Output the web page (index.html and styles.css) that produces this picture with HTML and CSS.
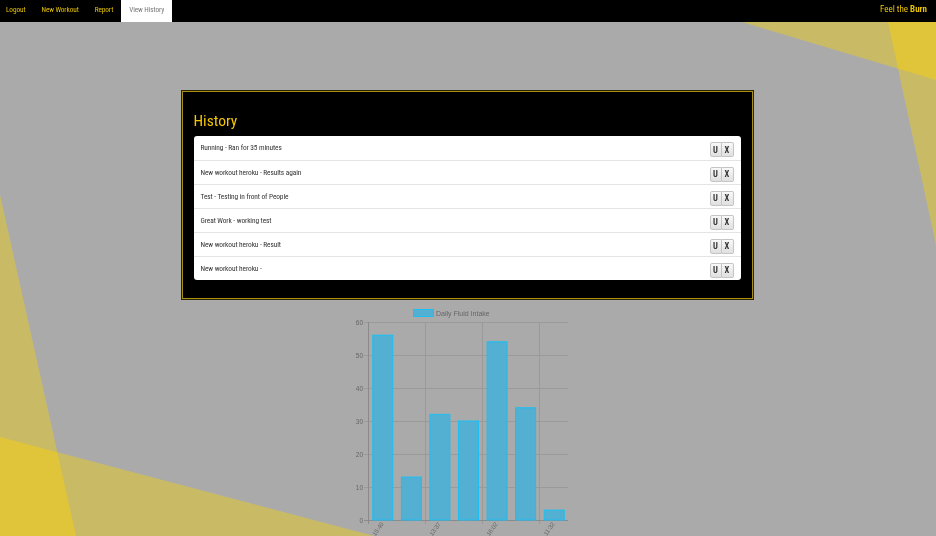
FILE: index.html
```html
<!DOCTYPE html>
<html>
<head>
<meta charset="utf-8">
<title>View History</title>
<link rel="stylesheet" href="styles.css">
</head>
<body>
<svg class="bg" viewBox="0 0 936 536" preserveAspectRatio="none" aria-hidden="true">
  <polygon points="742,22 936,22 936,80" fill="#c9bb66"/>
  <polygon points="888,22 936,22 936,245" fill="#c9bb66"/>
  <polygon points="888,22 936,22 936,80 898,68.6" fill="#e0c43a"/>
  <polygon points="0,195 0,536 76,536" fill="#c9bb66"/>
  <polygon points="0,437 0,536 374,536" fill="#c9bb66"/>
  <polygon points="0,437 57.3,452.2 76,536 0,536" fill="#e0c43a"/>
</svg>
<nav class="navbar">
  <ul class="nav">
    <li><a href="#">Logout</a></li>
    <li><a href="#">New Workout</a></li>
    <li><a href="#">Report</a></li>
    <li class="active"><a href="#">View History</a></li>
  </ul>
  <div class="brand">Feel the <b>Burn</b></div>
</nav>
<main class="main">
  <section class="card">
    <h1 class="title">History</h1>
    <ul class="list">
      <li class="row"><span class="text">Running - Ran for 35 minutes</span><span class="btns"><button class="btn">U</button><button class="btn">X</button></span></li>
      <li class="row"><span class="text">New workout heroku - Results again</span><span class="btns"><button class="btn">U</button><button class="btn">X</button></span></li>
      <li class="row"><span class="text">Test - Testing in front of People</span><span class="btns"><button class="btn">U</button><button class="btn">X</button></span></li>
      <li class="row"><span class="text">Great Work - working test</span><span class="btns"><button class="btn">U</button><button class="btn">X</button></span></li>
      <li class="row"><span class="text">New workout heroku - Result</span><span class="btns"><button class="btn">U</button><button class="btn">X</button></span></li>
      <li class="row"><span class="text">New workout heroku -</span><span class="btns"><button class="btn">U</button><button class="btn">X</button></span></li>
    </ul>
  </section>
  <svg class="chart" width="260" height="236" viewBox="0 0 260 236">
    <rect x="74.5" y="9.5" width="20" height="7" fill="#53b0d3" stroke="#19c0f5" stroke-width="1"/>
    <text x="97" y="15.5" class="legend">Daily Fluid Intake</text>
    <g stroke="#9a9a9a" stroke-width="1">
      <line x1="25" y1="22.5" x2="229" y2="22.5"/>
      <line x1="25" y1="55.5" x2="229" y2="55.5"/>
      <line x1="25" y1="88.5" x2="229" y2="88.5"/>
      <line x1="25" y1="121.5" x2="229" y2="121.5"/>
      <line x1="25" y1="154.5" x2="229" y2="154.5"/>
      <line x1="25" y1="187.5" x2="229" y2="187.5"/>
      <line x1="86.5" y1="22" x2="86.5" y2="224"/>
      <line x1="143.5" y1="22" x2="143.5" y2="224"/>
      <line x1="200.5" y1="22" x2="200.5" y2="224"/>
    </g>
    <g stroke="#8a8a8a" stroke-width="1">
      <line x1="25" y1="220.5" x2="229" y2="220.5"/>
      <line x1="29.5" y1="22" x2="29.5" y2="224"/>
    </g>
    <g class="ylab" text-anchor="end">
      <text x="24" y="24.5">60</text>
      <text x="24" y="57.5">50</text>
      <text x="24" y="90.5">40</text>
      <text x="24" y="123.5">30</text>
      <text x="24" y="156.5">20</text>
      <text x="24" y="189.5">10</text>
      <text x="24" y="222.5">0</text>
    </g>
    <g fill="#53b0d3" stroke="#19c0f5" stroke-width="1">
      <rect x="33.8" y="35.2" width="20" height="184.8"/>
      <rect x="62.4" y="177.1" width="20" height="42.9"/>
      <rect x="90.9" y="114.4" width="20" height="105.6"/>
      <rect x="119.5" y="121" width="20" height="99"/>
      <rect x="148.1" y="41.8" width="20" height="178.2"/>
      <rect x="176.6" y="107.8" width="20" height="112.2"/>
      <rect x="205.2" y="210.1" width="20" height="9.9"/>
    </g>
    <g class="xlab" text-anchor="end">
      <text transform="translate(45,224) rotate(-55)">15:40</text>
      <text transform="translate(102,224) rotate(-55)">13:37</text>
      <text transform="translate(159,224) rotate(-55)">16:02</text>
      <text transform="translate(216,224) rotate(-55)">11:32</text>
    </g>
  </svg>
</main>
</body>
</html>
```
FILE: styles.css
```css
html {
  background: #aaaaaa;
}
body {
  margin: 0;
  font-family: "Roboto Condensed", "Liberation Sans Narrow", "Open Sans", Roboto, sans-serif;
  color: #333;
}
.bg {
  position: fixed;
  top: 0;
  left: 0;
  width: 936px;
  height: 536px;
  z-index: -1;
}
.navbar {
  height: 22px;
  background: #000;
  display: flex;
  align-items: stretch;
  justify-content: space-between;
}
.nav {
  list-style: none;
  margin: 0 0 0 -2px;
  padding: 0;
  display: flex;
}
.nav li a {
  display: block;
  height: 22px;
  line-height: 20px;
  padding: 0 8px;
  font-size: 7.3px;
  letter-spacing: -0.1px;
  color: #e8c400;
  text-decoration: none;
}
.nav li.active a {
  background: #fff;
  color: #777;
}
.brand {
  color: #e8c400;
  font-size: 9px;
  line-height: 18px;
  padding-right: 9px;
}
.brand b {
  font-weight: 700;
}
.main {
  display: flex;
  flex-direction: column;
  align-items: center;
  padding-top: 69px;
}
.card {
  width: 547px;
  background: #000;
  border: 1px solid #a88f14;
  box-shadow: 0 0 0 1px #2a2500, inset 0 0 0 1px #000;
  padding: 0 11px 18px 11px;
  margin-left: -2px;
}
.title {
  margin: 0;
  padding-top: 16px;
  height: 28px;
  font-size: 15.5px;
  font-weight: 400;
  line-height: 26px;
  color: #f3c600;
}
.list {
  list-style: none;
  margin: 0;
  padding: 0;
  background: #fff;
  border-radius: 3px;
}
.row {
  height: 24px;
  box-sizing: border-box;
  border-top: 1px solid #e4e4e4;
  display: flex;
  align-items: center;
  justify-content: space-between;
  padding: 0 7px;
}
.row:first-child {
  border-top: none;
}
.text {
  font-size: 7.4px;
  letter-spacing: -0.1px;
  color: #333;
  margin-top: -1px;
}
.btns {
  display: flex;
  margin-top: 3px;
}
.btn {
  width: 12px;
  height: 15px;
  padding: 0;
  margin: 0;
  font-family: inherit;
  font-size: 8.5px;
  font-weight: 700;
  color: #333;
  background: linear-gradient(#f8f8f8, #e0e0e0);
  border: 1px solid #c4c4c4;
  border-radius: 2px 0 0 2px;
}
.btn + .btn {
  border-left: none;
  border-radius: 0 2px 2px 0;
}
.chart {
  display: block;
  margin-top: 1px;
  margin-left: 2px;
}
.legend {
  font-family: "Liberation Sans", Arial, sans-serif;
  font-size: 7px;
  fill: #666;
}
.ylab text {
  font-family: "Liberation Sans", Arial, sans-serif;
  font-size: 6.5px;
  fill: #666;
}
.xlab text {
  font-family: "Liberation Sans", Arial, sans-serif;
  font-size: 6px;
  fill: #666;
}
```
